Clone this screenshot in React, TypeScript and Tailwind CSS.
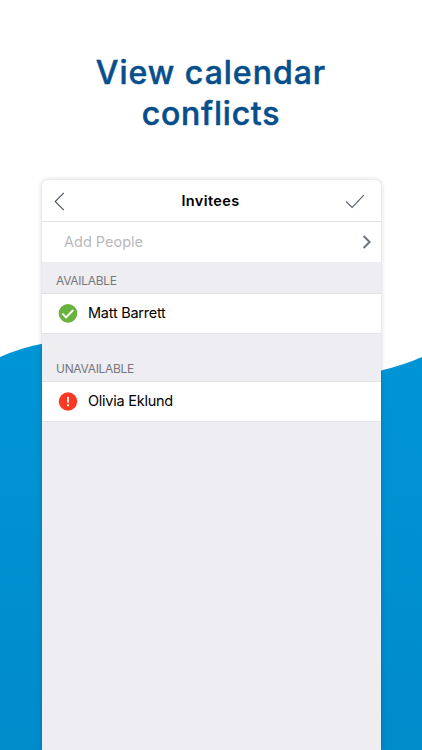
import type { ReactNode } from 'react';

const AvailableIcon = () => (
  <svg width="20" height="20" viewBox="0 0 20 20" className="shrink-0">
    <circle cx="10" cy="10.4" r="9.3" fill="#68b23d" />
    <path d="M4.4 10.6l3.7 3.7 7.1-7.3" fill="none" stroke="#fff" strokeWidth="1.9" />
  </svg>
);

const UnavailableIcon = () => (
  <svg width="20" height="20" viewBox="0 0 20 20" className="shrink-0">
    <circle cx="10" cy="10.5" r="9.2" fill="#fb3822" />
    <path d="M10 5.7v6" stroke="#fff" strokeWidth="1.8" />
    <path d="M10 13.2v2" stroke="#fff" strokeWidth="1.8" />
  </svg>
);

function SectionTitle({ className, children }: { className: string; children: ReactNode }) {
  return (
    <div
      className={`flex items-end border-b border-[#e4e4e8] pl-[14.5px] text-[12px] leading-[16px] tracking-[-0.3px] text-[#77777b] ${className}`}
    >
      {children}
    </div>
  );
}

function PersonRow({ icon, name }: { icon: ReactNode; name: string }) {
  return (
    <div className="flex h-[40px] items-center gap-[10px] border-b border-[#e4e4e8] bg-white pb-px pl-[16.5px] text-[14.5px] tracking-[-0.25px] text-black">
      {icon}
      <span>{name}</span>
    </div>
  );
}

export default function App() {
  return (
    <div className="relative flex h-[750px] w-[422px] flex-col overflow-hidden bg-white font-['Inter',sans-serif]">
      {/* Wave behind the card */}
      <svg className="absolute inset-0" width="422" height="750" viewBox="0 0 422 750">
        <defs>
          <linearGradient id="wave" x1="0" y1="0" x2="0" y2="1">
            <stop offset="0" stopColor="#0095d6" />
            <stop offset="1" stopColor="#008bcb" />
          </linearGradient>
        </defs>
        <path d="M0 357Q20 348 41 344C150 322 270 400 381 370.5Q404 365 422 357V750H0Z" fill="url(#wave)" />
      </svg>

      <h1 className="relative mt-[52px] text-center text-[32px] font-medium leading-[41px] tracking-[1px] text-[#074f8b] [-webkit-text-stroke:0.5px_#074f8b]">
        <span className="block">View calendar</span>
        <span className="block tracking-[0.75px]">conflicts</span>
      </h1>

      <div className="relative ml-[41.5px] mt-[46px] flex w-[339px] flex-1 flex-col overflow-hidden rounded-t-[6px] bg-[#eeedf2] shadow-[0_0_5px_rgba(0,0,0,0.2)]">
        <header className="flex h-[42px] items-center justify-between border-b border-[#e3e3e5] bg-white pl-[11px] pr-[16px]">
          <svg width="20" height="20" viewBox="0 0 20 20" fill="none" stroke="#46515c">
            <path d="M10.8 1.8L2.2 10.5l8.6 8.7" strokeWidth="1.1" />
          </svg>
          <span className="pl-[4px] text-[14.5px] font-semibold tracking-[0.4px] text-black">Invitees</span>
          <svg width="20" height="20" viewBox="0 0 20 20" fill="none" stroke="#5a646d">
            <path d="M1 10.5l6.2 6L18.8 4.2" strokeWidth="1.1" />
          </svg>
        </header>

        <div className="flex h-[40px] items-center justify-between bg-white pl-[22.5px] pr-[9px] text-[14.5px] text-[#b9b9bb]">
          <span>Add People</span>
          <svg width="10" height="16" viewBox="0 0 10 16" fill="none" stroke="#6b747c">
            <path d="M1.6 2l6 6-6 6" strokeWidth="2" />
          </svg>
        </div>

        <SectionTitle className="h-[32px] pb-[4px]">AVAILABLE</SectionTitle>
        <PersonRow icon={<AvailableIcon />} name="Matt Barrett" />
        <SectionTitle className="h-[48px] pb-[4px]">UNAVAILABLE</SectionTitle>
        <PersonRow icon={<UnavailableIcon />} name="Olivia Eklund" />
      </div>
    </div>
  );
}
